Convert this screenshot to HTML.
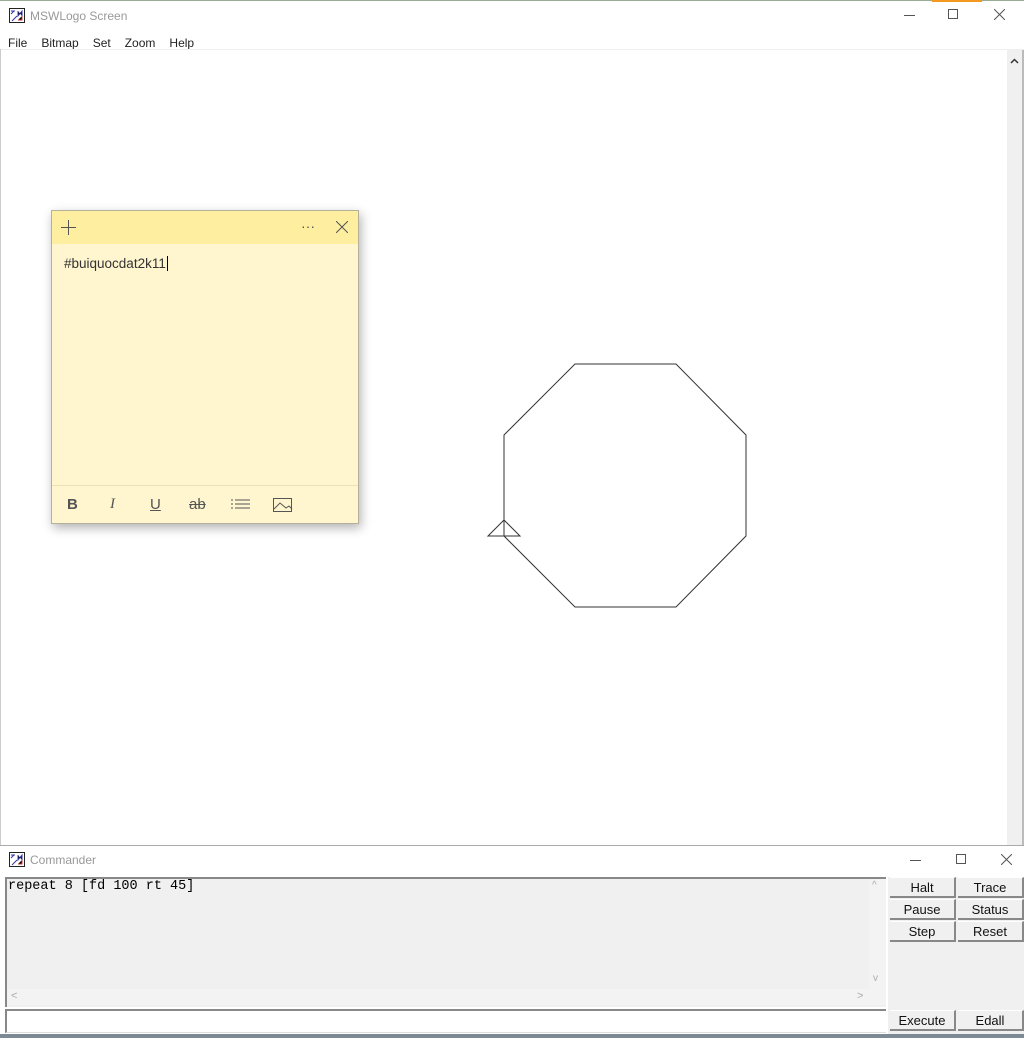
<!DOCTYPE html>
<html><head><meta charset="utf-8"><style>
*{margin:0;padding:0;box-sizing:border-box}
body{width:1024px;height:1038px;overflow:hidden;background:#fff;font-family:"Liberation Sans",sans-serif;position:relative}
.abs{position:absolute}
.t{font-size:12px;color:#999}
.menu span{margin-right:14px;font-size:12px;color:#222}
.btn{position:absolute;width:66px;height:21px;background:#f0f0f0;border-right:2px solid #888;border-bottom:2px solid #888;border-top:1px solid #fff;font-size:13px;text-align:center;line-height:19px;color:#111}
</style></head><body>
<div class="abs" style="left:0;top:0;width:1024px;height:1px;background:#9a9"></div>
<div class="abs" style="left:932px;top:0;width:50px;height:2px;background:#f39a1e"></div>
<svg class="abs" style="left:9px;top:8px" width="16" height="15"><rect x=".5" y=".5" width="15" height="14" fill="#fff" stroke="#222"/><path d="M2 3h4M2 6l3-3M9 3v5l4-5v5M3 13l5-5M9 12h4" stroke="#33a" stroke-width="1"/><path d="M9 12h4v-4" stroke="#c33"/></svg>
<div class="abs t" style="left:30px;top:9px">MSWLogo Screen</div>
<div class="abs" style="left:904px;top:15px;width:11px;height:1px;background:#555"></div>
<div class="abs" style="left:948px;top:9px;width:10px;height:10px;border:1px solid #555"></div>
<svg class="abs" style="left:994px;top:9px" width="11" height="11"><path d="M0 0L11 11M11 0L0 11" stroke="#555"/></svg>
<div class="abs menu" style="left:8px;top:34px"><span>File</span><span>Bitmap</span><span>Set</span><span>Zoom</span><span>Help</span></div>
<div class="abs" style="left:0;top:49px;width:1024px;height:1px;background:#eee"></div>
<div class="abs" style="left:0;top:49px;width:1px;height:797px;background:#ccc"></div>
<div class="abs" style="left:1007px;top:50px;width:15px;height:796px;background:#f0f0f0"></div>
<svg class="abs" style="left:1010px;top:58px" width="9" height="6"><path d="M1 5L4.5 1.5L8 5" fill="none" stroke="#333" stroke-width="1.5"/></svg>
<div class="abs" style="left:1022px;top:50px;width:2px;height:796px;background:#bbb"></div>
<svg class="abs" style="left:0;top:0" width="1024" height="1038"><polygon points="575,364 676,364 746,435 746,536 676,607 575,607 504,536 504,435" fill="none" stroke="#333" stroke-width="1"/><polygon points="488,536 520,536 504,520" fill="none" stroke="#333"/></svg>
<div class="abs" style="left:51px;top:210px;width:308px;height:314px;background:#fff5cf;border:1px solid #b4b09a;box-shadow:2px 4px 10px rgba(0,0,0,.3)">
<div style="height:33px;background:#fdeea0;position:relative">
<svg class="abs" style="left:9px;top:9px" width="15" height="15"><path d="M7.5 0v15M0 7.5h15" stroke="#555"/></svg>
<div class="abs" style="left:249px;top:7px;font-size:14px;color:#555">···</div>
<svg class="abs" style="left:284px;top:10px" width="12" height="12"><path d="M0 0L12 12M12 0L0 12" stroke="#555"/></svg>
</div>
<div class="abs" style="left:12px;top:45px;font-size:13.5px;color:#333">#buiquocdat2k11<span style="border-left:1px solid #000;margin-left:1px"></span></div>
<div class="abs" style="left:0;top:274px;width:306px;height:1px;background:#ece1b5"></div>
<div class="abs" style="left:15px;top:285px;font-size:15px;font-weight:bold;color:#555">B</div>
<div class="abs" style="left:58px;top:285px;font-size:15px;font-style:italic;font-family:'Liberation Serif';color:#555">I</div>
<div class="abs" style="left:98px;top:285px;font-size:15px;text-decoration:underline;color:#555">U</div>
<div class="abs" style="left:137px;top:285px;font-size:15px;text-decoration:line-through;color:#555">ab</div>
<svg class="abs" style="left:179px;top:287px" width="20" height="14"><path d="M0 2h2M4 2h15M0 6h2M4 6h15M0 10h2M4 10h15" stroke="#555"/></svg>
<svg class="abs" style="left:221px;top:286px" width="20" height="16"><rect x=".5" y="1.5" width="18" height="13" fill="none" stroke="#555"/><path d="M1 12l6-6 6 5 3-2 3 3" fill="none" stroke="#555"/></svg>
</div>
<div class="abs" style="left:0;top:845px;width:1024px;height:193px;background:#fff;border-top:1px solid #aaa"></div>
<svg class="abs" style="left:9px;top:852px" width="16" height="15"><rect x=".5" y=".5" width="15" height="14" fill="#fff" stroke="#222"/><path d="M2 3h4M2 6l3-3M9 3v5l4-5v5M3 13l5-5" stroke="#33a"/><path d="M9 12h4v-4" stroke="#c33"/></svg>
<div class="abs t" style="left:30px;top:853px">Commander</div>
<div class="abs" style="left:910px;top:860px;width:11px;height:1px;background:#555"></div>
<div class="abs" style="left:956px;top:854px;width:10px;height:10px;border:1px solid #555"></div>
<svg class="abs" style="left:1001px;top:854px" width="11" height="11"><path d="M0 0L11 11M11 0L0 11" stroke="#555"/></svg>
<div class="abs" style="left:5px;top:877px;width:881px;height:130px;background:#f0f0f0;border-top:2px solid #888;border-left:2px solid #888"></div>
<div class="abs" style="left:8px;top:879px;font-family:'Liberation Mono',monospace;font-size:13.5px;color:#000">repeat 8 [fd 100 rt 45]</div>
<div class="abs" style="left:869px;top:879px;width:17px;height:110px;background:#f3f3f3"></div>
<div class="abs" style="left:7px;top:989px;width:879px;height:16px;background:#f3f3f3"></div>
<div class="abs" style="left:872px;top:880px;font-size:10px;color:#aaa">^</div>
<div class="abs" style="left:873px;top:973px;font-size:10px;color:#aaa">v</div>
<div class="abs" style="left:11px;top:990px;font-size:11px;color:#aaa">&lt;</div>
<div class="abs" style="left:857px;top:990px;font-size:11px;color:#aaa">&gt;</div>
<div class="abs" style="left:5px;top:1009px;width:881px;height:24px;background:#fff;border-top:2px solid #888;border-left:2px solid #888;border-bottom:1px solid #ddd"></div>
<div class="abs" style="left:888px;top:877px;width:136px;height:157px;background:#f0f0f0"></div>
<div class="btn" style="left:890px;top:877px">Halt</div>
<div class="btn" style="left:958px;top:877px">Trace</div>
<div class="btn" style="left:890px;top:899px">Pause</div>
<div class="btn" style="left:958px;top:899px">Status</div>
<div class="btn" style="left:890px;top:921px">Step</div>
<div class="btn" style="left:958px;top:921px">Reset</div>
<div class="btn" style="left:890px;top:1010px">Execute</div>
<div class="btn" style="left:958px;top:1010px">Edall</div>
<div class="abs" style="left:0;top:1034px;width:1024px;height:4px;background:#7d8a94"></div>
</body></html>
